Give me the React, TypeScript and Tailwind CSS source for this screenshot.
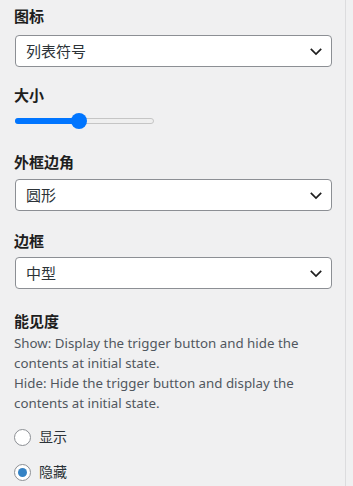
import React from 'react';

const font = { fontFamily: '"Noto Sans", "Noto Sans CJK SC", sans-serif' };

const Chevron = () => (
  <svg width="14" height="14" viewBox="0 0 14 14" className="shrink-0">
    <path d="M1.8 4.8L7 10L12.2 4.8" fill="none" stroke="#1e1e1e" strokeWidth="1.7" />
  </svg>
);

const Select = ({ value, className = '' }: { value: string; className?: string }) => (
  <div className={`flex items-center justify-between w-[317px] h-8 pl-[10px] pr-[8px] bg-white border border-[#8c8f94] rounded-[4px] text-[15px] text-[#2c3338] ${className}`}>
    <span className="leading-5">{value}</span>
    <Chevron />
  </div>
);

const Label = ({ children, className = '' }: { children: React.ReactNode; className?: string }) => (
  <div className={`text-[15px] leading-5 font-semibold text-[#1e1e1e] ${className}`}>{children}</div>
);

const Radio = ({ label, checked, className = '' }: { label: string; checked?: boolean; className?: string }) => (
  <div className={`flex items-center h-5 ${className}`}>
    <span className="w-[17px] h-[17px] rounded-full bg-white border border-[#8c8f94] flex items-center justify-center">
      {checked && <span className="w-[9px] h-[9px] rounded-full bg-[#3582c4]" />}
    </span>
    <span className="ml-[8px] text-[14px] text-[#2c3338] leading-5">{label}</span>
  </div>
);

export default function App() {
  return (
    <div className="w-[353px] h-[486px] bg-[#f0f0f1] overflow-hidden flex" style={font}>
      <div className="w-[346px] h-full border-r border-[#dcdcde] pl-[14px] pt-[6px]">
        <Label>图标</Label>
        <Select value="列表符号" className="mt-[9px] ml-px" />

        <Label className="mt-[18px]">大小</Label>
        <div className="mt-[8px] h-4 w-[140px] relative flex items-center">
          <div className="absolute left-[1px] right-0 h-[6px] rounded-full bg-[#efefef] border border-[#c5c5c5]" />
          <div className="absolute left-[1px] w-[64px] h-[6px] rounded-full bg-[#0075ff]" />
          <div className="absolute left-[57px] w-4 h-4 rounded-full bg-[#0075ff]" />
        </div>

        <Label className="mt-[23px]">外框边角</Label>
        <Select value="圆形" className="mt-[7px] ml-px" />

        <Label className="mt-[20px]">边框</Label>
        <Select value="中型" className="mt-[6px] ml-px" />

        <Label className="mt-[22px]">能见度</Label>
        <p className="mt-[2px] text-[13.3px] leading-5 text-[#50575e] w-[310px]">
          Show: Display the trigger button and hide the contents at initial state.
          <br />
          Hide: Hide the trigger button and display the contents at initial state.
        </p>

        <Radio label="显示" className="mt-[14px]" />
        <Radio label="隐藏" checked className="mt-[15px]" />
      </div>
    </div>
  );
}
